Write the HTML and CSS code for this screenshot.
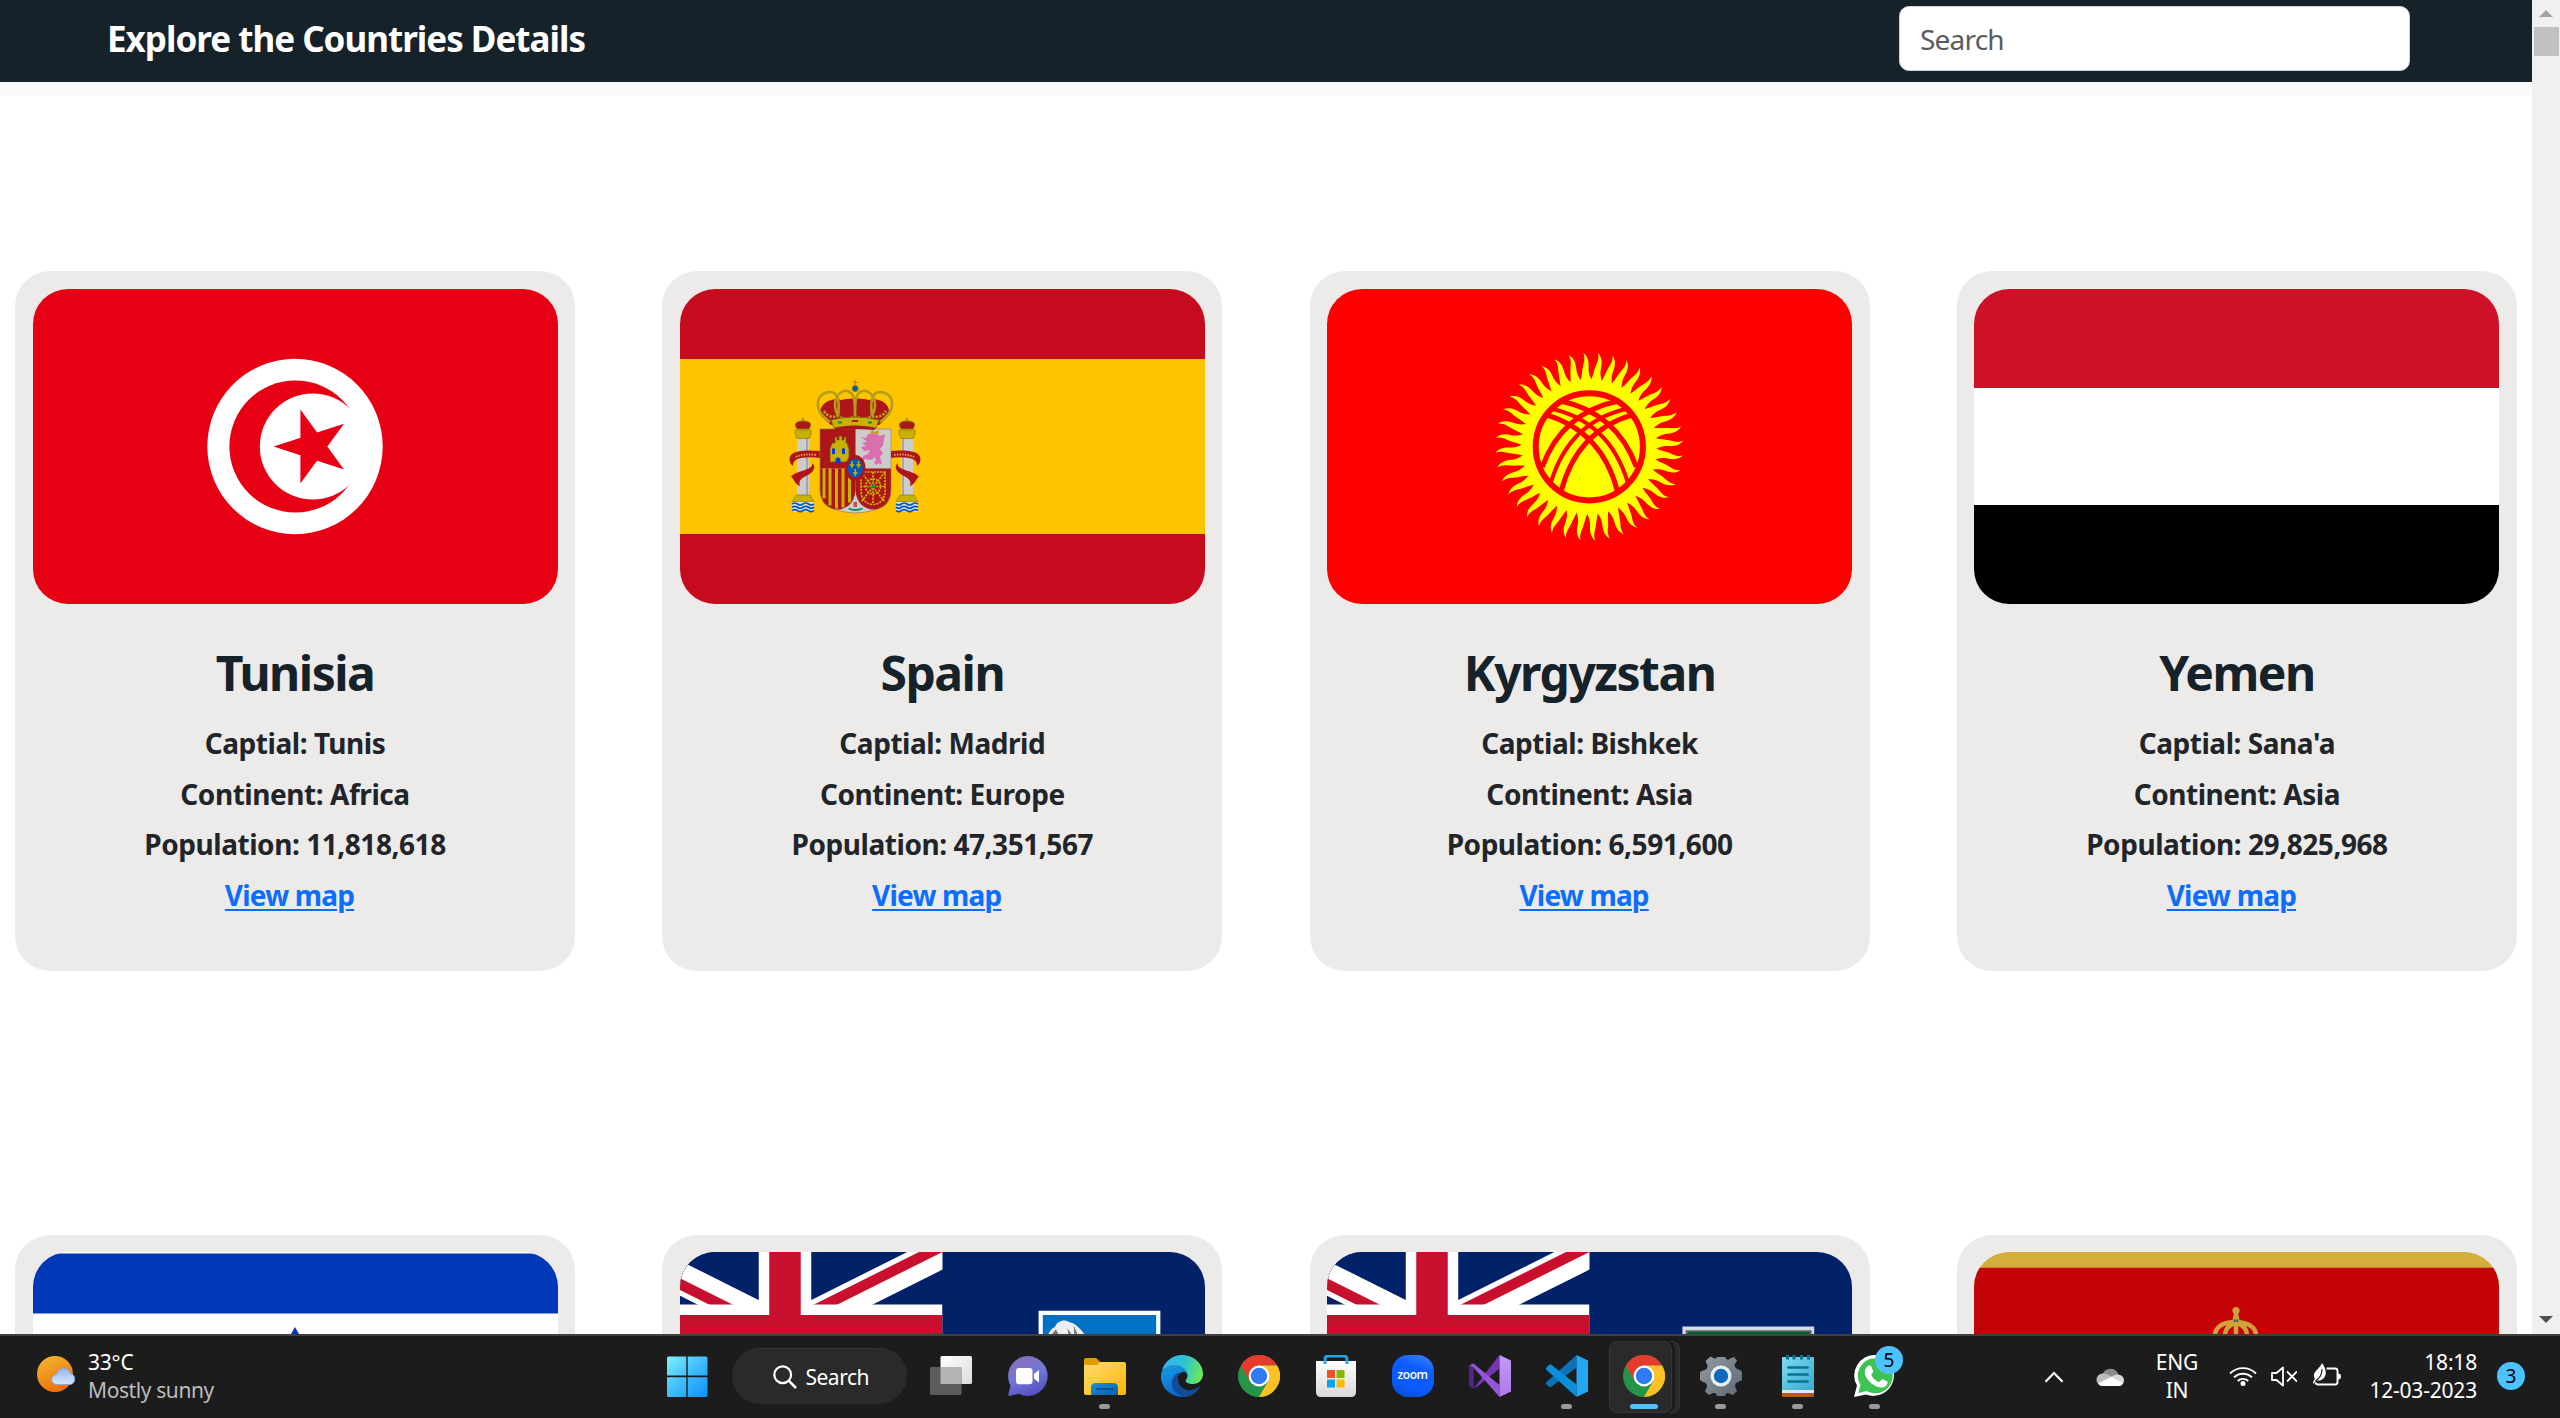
FILE: index.html
```html
<!DOCTYPE html>
<html lang="en">
<head>
<meta charset="utf-8">
<title>Explore the Countries Details</title>
<link rel="stylesheet" href="styles.css">
</head>
<body>
<svg class="defs" width="0" height="0" aria-hidden="true">
  <defs>
    <clipPath id="jackBox"><path d="M0 0h60v30H0z"/></clipPath>
    <clipPath id="jackHalves"><path d="M30,15h30v15zv15h-30zh-30v-15zv-15h30z"/></clipPath>
    <symbol id="jack" viewBox="0 0 60 30">
      <g clip-path="url(#jackBox)">
        <path d="M0 0h60v30H0z" fill="#012169"/>
        <path d="M0,0L60,30M60,0L0,30" stroke="#fff" stroke-width="6"/>
        <path d="M0,0L60,30M60,0L0,30" stroke="#c8102e" stroke-width="4" clip-path="url(#jackHalves)"/>
        <path d="M30 0v30M0 15h60" stroke="#fff" stroke-width="10"/>
        <path d="M30 0v30M0 15h60" stroke="#c8102e" stroke-width="6"/>
      </g>
    </symbol>
    <symbol id="chrome" viewBox="0 0 42 42">
      <circle cx="21" cy="21" r="21" fill="#25954a"/>
      <path d="M2.8 10.5A21 21 0 0 1 39.2 10.5H21L11.9 26.25z" fill="#e33b2e"/>
      <path d="M39.2 10.5A21 21 0 0 1 21 42L30.1 26.25L21 10.5z" fill="#fdc025"/>
      <circle cx="21" cy="21" r="10.4" fill="#fff"/>
      <circle cx="21" cy="21" r="8.2" fill="#2f7bf0"/>
    </symbol>
  </defs>
</svg>

<div class="viewport">
  <div class="page">
    <header class="navbar">
      <h1 class="brand">Explore the Countries Details</h1>
      <input class="search" type="text" placeholder="Search">
    </header>
    <div class="band"></div>
    <main class="grid">
      <article class="card">
        <svg class="flag" viewBox="0 0 525 315">
          <path d="M0 0h525v315H0z" fill="#e70013"/>
          <circle cx="262" cy="157.5" r="87.7" fill="#fff"/>
          <circle cx="262.4" cy="157.5" r="66" fill="#e70013"/>
          <circle cx="279.8" cy="157.5" r="53" fill="#fff"/>
          <path d="M240.6 157.5L311 134.8L267.4 194.4V120.4L311 180.4z" fill="#e70013"/>
        </svg>
        <h2 class="name">Tunisia</h2>
        <p class="fact">Captial: Tunis</p>
        <p class="fact">Continent: Africa</p>
        <p class="fact">Population: 11,818,618</p>
        <p class="fact"><a class="map" href="#">View map</a></p>
      </article>

      <article class="card">
        <svg class="flag" viewBox="0 0 525 315">
          <path d="M0 0h525v315H0z" fill="#c60b1e"/>
          <path d="M0 70h525v175H0z" fill="#ffc400"/>
          <g id="pillar">
            <path d="M117 149h12v57h-12z" fill="#ccc"/>
            <path d="M126 149h2v57h-2z" fill="#a5a5a8"/>
            <path d="M115 141h16v4l-2 4.500h-12l-2-4.500zM112 213l4-7h14l4 7z" fill="#c8b100" stroke="#7d6f10" stroke-width=".6"/>
            <path d="M117 140c-4-6 0-8 6-8s10 2 6 8z" fill="#ad1519" stroke="#8d7a10" stroke-width=".9"/>
            <path d="M123 129v4" stroke="#8d7a10" stroke-width="1.300"/>
            <path d="M112 213h22v9.500h-22z" fill="#dbe0e0"/>
            <path d="M112 215q2.800-2 5.500 0t5.500 0t5.500 0t5.500 0M112 218.300q2.800-2 5.500 0t5.500 0t5.500 0t5.500 0M112 221.600q2.800-2 5.500 0t5.500 0t5.500 0t5.500 0" fill="none" stroke="#005bbf" stroke-width="1.700"/>
            <path d="M140 162c-12-1-24-1-29 4c-3 4-1 9 2 11c0-5 3-7 8-8c6-1 12-1 19 0zM132 174c5 4 1 9-4 12c-6 3-10 5-8 11c-6-2-7-10-9-9c3-6 24-7 21-14z" fill="#ad1519"/>
            <path d="M116 168q7-3.500 20-2" stroke="#d9a53a" stroke-width="2" stroke-dasharray="1.500 1.200" fill="none"/>
          </g>
          <use href="#pillar" transform="translate(350 0) scale(-1 1)"/>
          <path d="M140 140h71v62c0 9-7 17-17 19q-9 3-18.500 3t-18.500-3c-10-2-17-10-17-19z" fill="#ccc"/>
          <path d="M140 140h35.500v39.500H140z" fill="#ad1519"/>
          <path d="M140 179.500h35.500V201c-1 26-35.500 26-35.500 0z" fill="#ad1519"/>
          <path d="M144 179.500v30M150 179.500v37M156.500 179.500v40M163 179.500v39M169.500 179.500v34" stroke="#c8b100" stroke-width="3"/>
          <path d="M175.500 179.500H211V201c0 26-34.500 26-35.500 0z" fill="#ad1519"/>
          <g fill="none" stroke="#c8b100" stroke-width="1.700" stroke-dasharray="2.200 1">
            <path d="M181 183h24v19c0 18-24 18-24 0zM181 183l24 30M205 183l-24 30M193 183v32M180 197.500h26"/>
            <circle cx="193" cy="197.500" r="7.500"/>
          </g>
          <circle cx="193" cy="197.500" r="2" fill="#058e6e"/>
          <path d="M150 173v-13l2-6h3v-6h2v3h2v-4h3v4h2v-3h2v6h1l2 6v13z" fill="#c8b100" stroke="#66590d" stroke-width=".7"/>
          <path d="M152 165v-4a1.500 2 0 0 1 3 0v4zM162 165v-4a1.500 2 0 0 1 3 0v4zM155.500 174v-3a2.500 2.500 0 0 1 5 0v3z" fill="#0039f0"/>
          <path d="M181 148l5 1 2-4 7-1 5 3 5-2-2 11-3 4 3 4-3 4 2 7-6-1-1-6-4 3-6-1-3 3 1-6 5-2 2-4-6 1-3-4 5-1-4-3 5-1zM193 172l6 2-3 2z" fill="#db6fae"/>
          <path d="M190 144l2-3 3 2 3-2 1 4z" fill="#c8a100"/>
          <ellipse cx="175.300" cy="179" rx="10.200" ry="13" fill="#ad1519"/>
          <ellipse cx="175.300" cy="179" rx="7.500" ry="9.500" fill="#005bbf"/>
          <path d="M172 172v7M178.500 172v7M175.300 180v7M169.800 176h4.400M176.300 176h4.400M173 184h4.600" stroke="#c8b100" stroke-width="1.500"/>
          <path d="M168.500 219.500q7 3 14 0" stroke="#058e6e" stroke-width="1.800" fill="none"/>
          <path d="M173.500 213h3.500v5h-3.500z" fill="#b6574b"/>
          <path d="M140 140h71v62c0 9-7 17-17 19q-9 3-18.500 3t-18.500-3c-10-2-17-10-17-19z" fill="none" stroke="#8f7b4a" stroke-width=".6"/>
          <path d="M141 127C137 115 152 108 161 111C170 109 181 109 189 111C198 108 213 115 208 127L199 136H151z" fill="#ad1519"/>
          <g fill="none" stroke="#b59d17" stroke-width="2.600">
            <path d="M150 133C131 120 137 103 150 103C158 103 160 112 158 127M158 127C150 111 160 101 167 102C175 103 175 113 175 127C175 113 175 103 183 102C190 101 200 111 192 127M200 133C219 120 213 103 200 103C192 103 190 112 192 127"/>
            <path d="M144 122q5 8 14 5q8 5 17 0q9 5 17 0q9 3 14-5" stroke-dasharray="2.500 1.200"/>
          </g>
          <path d="M151 131q24-6 48 0l-3 8q-21-4-42 0z" fill="#c8b100" stroke="#74660f" stroke-width=".8"/>
          <path d="M158 133.500h4M188 133.500h4" stroke="#058e6e" stroke-width="2"/><path d="M172 132h6" stroke="#ad1519" stroke-width="2"/>
          <path d="M154 139q21-5 42 0l-2 2q-19-2-38 0z" fill="#ad1519"/>
          <circle cx="175.200" cy="99.500" r="3" fill="#005bbf" stroke="#8d7a10"/>
          <path d="M175.200 91v6M173 93.500h4.500" stroke="#a38c10" stroke-width="1.200"/>
        </svg>
        <h2 class="name">Spain</h2>
        <p class="fact">Captial: Madrid</p>
        <p class="fact">Continent: Europe</p>
        <p class="fact">Population: 47,351,567</p>
        <p class="fact"><a class="map" href="#">View map</a></p>
      </article>

      <article class="card">
        <svg class="flag" viewBox="0 0 525 315">
          <path d="M0 0h525v315H0z" fill="#f00"/>
          <g transform="translate(262.300 157.800)">
            <g fill="#ff0">
              <g id="rays">
                <path id="ray" d="M-6-94C-1.500-90-.3-86-.7-79C-1-74 .5-69 5-62L-10-62C-7-70-7.500-76-6-82C-4.500-87-4.500-90-6-94z"/>
                <use href="#ray" transform="rotate(9)"/>
                <use href="#ray" transform="rotate(18)"/>
                <use href="#ray" transform="rotate(27)"/>
                <use href="#ray" transform="rotate(36)"/>
              </g>
              <use href="#rays" transform="rotate(45)"/>
              <use href="#rays" transform="rotate(90)"/>
              <use href="#rays" transform="rotate(135)"/>
              <use href="#rays" transform="rotate(180)"/>
              <use href="#rays" transform="rotate(225)"/>
              <use href="#rays" transform="rotate(270)"/>
              <use href="#rays" transform="rotate(315)"/>
              <circle r="65"/>
            </g>
            <circle r="53.600" fill="none" stroke="#f00" stroke-width="6"/>
            <g id="lattice" fill="none" stroke="#f00">
              <path d="M-28 44Q-12.500-15.500 43-32" stroke-width="5"/>
              <path d="M-38.500 36Q-20-26 40-38.500" stroke-width="4"/>
              <path d="M-47 20Q-27-34.500 30-46" stroke-width="5"/>
            </g>
            <use href="#lattice" transform="scale(-1 1)"/>
          </g>
        </svg>
        <h2 class="name">Kyrgyzstan</h2>
        <p class="fact">Captial: Bishkek</p>
        <p class="fact">Continent: Asia</p>
        <p class="fact">Population: 6,591,600</p>
        <p class="fact"><a class="map" href="#">View map</a></p>
      </article>

      <article class="card">
        <svg class="flag" viewBox="0 0 525 315">
          <path d="M0 0h525v99H0z" fill="#ce1126"/>
          <path d="M0 99h525v117H0z" fill="#fff"/>
          <path d="M0 216h525v99H0z" fill="#000"/>
        </svg>
        <h2 class="name">Yemen</h2>
        <p class="fact">Captial: Sana'a</p>
        <p class="fact">Continent: Asia</p>
        <p class="fact">Population: 29,825,968</p>
        <p class="fact"><a class="map" href="#">View map</a></p>
      </article>

      <article class="card">
        <svg class="flag" viewBox="0 0 525 315">
          <path d="M0 0h525v315H0z" fill="#fff"/>
          <path d="M0 1.600h525v60H0z" fill="#0038b8"/>
          <path d="M262 85l58 100H204z" fill="none" stroke="#0038b8" stroke-width="10"/>
        </svg>
      </article>

      <article class="card">
        <svg class="flag" viewBox="100 0 1000 600">
          <path d="M0 0h1200v600H0z" fill="#012169"/>
          <use href="#jack" width="600" height="300"/>
          <path d="M783 112h232v260H783z" fill="#fff"/>
          <path d="M791 120h216v250H791z" fill="#0072c6"/>
          <path d="M800 160c4-10 8-14 14-17c5-12 18-16 28-9c10 1 20 12 28 22c20 4 70-2 110 4v20H800z" fill="#eee"/>
          <path d="M808 157l8-10 6 12zM838 145l8 12h-6zM850 140l7 16h-6z" fill="#777"/>
        </svg>
      </article>

      <article class="card">
        <svg class="flag" viewBox="100 0 1000 600">
          <path d="M0 0h1200v600H0z" fill="#012169"/>
          <use href="#jack" width="600" height="300"/>
          <path d="M777 142h251v240H777z" fill="#d5dbe6"/>
          <path d="M783 149h240v230H783z" fill="#666"/>
          <path d="M787 152h232v230H787" fill="#006129"/>
        </svg>
      </article>

      <article class="card">
        <svg class="flag" viewBox="0 0 525 315">
          <path d="M0 0h525v315H0z" fill="#d3ae3b"/>
          <path d="M-36 15.700h598v284H-36z" fill="#c40308"/>
          <g fill="none" stroke="#d0a138" stroke-width="4.500">
            <path d="M243 90C237 78 246 70 261 70C277 70 286 78 280 90M252 90C249 80 253 73 262 71C271 73 275 80 272 90M262 70v20"/>
          </g>
          <circle cx="262" cy="58.500" r="3.600" fill="#d0a138"/>
          <path d="M260 61h4l2 9h-8z" fill="#d0a138"/>
          <path d="M259.500 67.500h5v2.500h-5z" fill="#4d6f6e"/>
          <path d="M197 90l2-6 2 6zM323 90l2-6 2 6z" fill="#d0a138"/>
        </svg>
      </article>
    </main>
  </div>
  <div class="scrollbar">
    <svg class="arrow" viewBox="0 0 14 7"><path d="M0 7L7 0L14 7z" fill="#a3a3a3"/></svg>
    <div class="thumb"></div>
    <svg class="arrow down" viewBox="0 0 14 7"><path d="M0 0h14L7 7z" fill="#505050"/></svg>
  </div>
</div>

<footer class="taskbar">
  <div class="weather">
    <svg class="weather-icon" viewBox="0 0 40 38">
      <defs>
        <linearGradient id="sun" x1=".2" y1="0" x2=".7" y2="1"><stop offset="0" stop-color="#f1b62f"/><stop offset="1" stop-color="#ee6a0c"/></linearGradient>
        <linearGradient id="cloud" x1="0" y1="0" x2="0" y2="1"><stop offset="0" stop-color="#94b6f0"/><stop offset="1" stop-color="#dbe7fa"/></linearGradient>
      </defs>
      <circle cx="18" cy="19" r="18" fill="url(#sun)"/>
      <path d="M20 29.500a5 5 0 0 1-.7-10a7.500 7.500 0 0 1 14.500-.8a5.600 5.600 0 0 1-.4 10.800z" fill="url(#cloud)" stroke="#7fa3e6" stroke-width=".8"/>
    </svg>
    <div class="lines"><div>33°C</div><div class="dim">Mostly sunny</div></div>
  </div>

  <div class="apps">
    <div class="slot">
      <svg class="icon" viewBox="0 0 42 42">
        <defs><linearGradient id="win" x1="0" y1="0" x2="1" y2="1"><stop offset="0" stop-color="#7df2fd"/><stop offset=".5" stop-color="#40bdfc"/><stop offset="1" stop-color="#0a93fb"/></linearGradient></defs>
        <path d="M2.500 1.500H20.300V20.500H1V3q0-1.500 1.500-1.500zM21.700 1.500H40q1.500 0 1.500 1.500V20.500H21.700zM1 22.200H20.300V42H2.500Q1 42 1 40.500zM21.700 22.200H41.500V40.500Q41.500 42 40 42H21.700z" fill="url(#win)"/>
      </svg>
    </div>
    <div class="pill">
      <svg class="lens" viewBox="0 0 24 24"><circle cx="9.700" cy="9.700" r="8.400" fill="none" stroke="#fff" stroke-width="2.200"/><path d="M15.700 15.700L23 23" stroke="#fff" stroke-width="2.600"/></svg>
      <span>Search</span>
    </div>
    <div class="slot">
      <svg class="icon" viewBox="0 0 42 42">
        <defs><linearGradient id="tv" x1="0" y1="0" x2="1" y2="1"><stop offset="0" stop-color="#fff"/><stop offset="1" stop-color="#dcdcdc"/></linearGradient></defs>
        <rect x="10.500" y="1" width="31.500" height="28" rx="1.500" fill="url(#tv)"/>
        <rect x="0" y="12" width="31.500" height="28" rx="1.500" fill="#5c5c5c"/>
        <path d="M10.500 12H30q1.500 0 1.500 1.500V29h-21z" fill="#b4b4b4"/>
      </svg>
    </div>
    <div class="slot">
      <svg class="icon" viewBox="0 0 42 42">
        <defs><linearGradient id="chat" x1=".2" y1="0" x2=".6" y2="1"><stop offset="0" stop-color="#8b6bb8"/><stop offset=".5" stop-color="#7378d6"/><stop offset="1" stop-color="#5450c4"/></linearGradient></defs>
        <path d="M21 1a20 20 0 1 1-9.500 37.800L2.500 41Q1 41 1.400 39.500L3.500 30.500A20 20 0 0 1 21 1z" fill="url(#chat)"/>
        <rect x="9" y="13" width="16.500" height="16.300" rx="3" fill="#fff"/>
        <path d="M27 19l5-4v12.500l-5-4z" fill="#fff"/>
      </svg>
    </div>
    <div class="slot">
      <svg class="icon" viewBox="0 0 42 42">
        <defs><linearGradient id="fold" x1="0" y1="0" x2="1" y2="1"><stop offset="0" stop-color="#ffdb6e"/><stop offset="1" stop-color="#fbb806"/></linearGradient>
        <linearGradient id="tray" x1="0" y1="0" x2="1" y2="1"><stop offset="0" stop-color="#1d8fdc"/><stop offset="1" stop-color="#0a5ea9"/></linearGradient></defs>
        <path d="M0 5q0-2 2-2h10l5 4.500v6H0z" fill="#dd9c02"/>
        <path d="M0 11q0-1 1-1h12l3-3h24q2 0 2 2v29q0 2-2 2H2q-2 0-2-2z" fill="url(#fold)"/>
        <path d="M7 40v-7.500q0-4.500 4.500-4.500h18q4.500 0 4.500 4.500V40z" fill="url(#tray)"/>
        <path d="M12.500 34h17" stroke="#075092" stroke-width="2"/>
      </svg>
      <i class="dot"></i>
    </div>
    <div class="slot">
      <svg class="icon" viewBox="0 0 42 42">
        <defs>
          <linearGradient id="e1" x1="0" y1=".3" x2="1" y2=".5"><stop offset="0" stop-color="#35b5f1"/><stop offset=".5" stop-color="#2cc3d3"/><stop offset="1" stop-color="#6cea57"/></linearGradient>
          <linearGradient id="e2" x1="0" y1="0" x2=".4" y2="1"><stop offset="0" stop-color="#1b9de2"/><stop offset="1" stop-color="#0868cf"/></linearGradient>
        </defs>
        <path d="M1 15C4 6 12 0 21 0C33 0 42 9 42 18.500C42 25 37.500 29 32 29C28 29 24.500 27.500 24.500 25.500C25.500 24 26.500 23 26.500 20C25 13 12 8 1 15z" fill="url(#e1)"/>
        <path d="M0 21C0 14 6 10 13 10C21 10 26 15 26.500 19C25 17 23 16.500 21 17C16 19 13 29 18 36C21 40 26 41.500 27 41C16 44.500 0 37 0 21z" fill="url(#e2)"/>
        <path d="M19 17.500C15 22 16.500 33 26 35C32 36 36 32.500 38 31.500Q39 31 38.800 32C36 37 31 41.500 24 41.800C14 40 10 33 11 26C12 21 16 18 19 17.500z" fill="#124e98"/>
      </svg>
    </div>
    <div class="slot"><svg class="icon" viewBox="0 0 42 42"><use href="#chrome"/></svg></div>
    <div class="slot">
      <svg class="icon" viewBox="0 0 42 42">
        <defs><linearGradient id="bag" x1="0" y1="0" x2="0" y2="1"><stop offset="0" stop-color="#fff"/><stop offset="1" stop-color="#d9d9d9"/></linearGradient></defs>
        <path d="M1 6h40v31q0 5-5 5H6q-5 0-5-5z" fill="url(#bag)"/>
        <path d="M10 9V4q0-3 3-3h16q3 0 3 3v5" fill="none" stroke="#20a6e8" stroke-width="2.800"/>
        <path d="M12 15h8v8h-8z" fill="#f25022"/><path d="M21.500 15h8v8h-8z" fill="#7fba00"/><path d="M12 24.500h8v8h-8z" fill="#00a4ef"/><path d="M21.500 24.500h8v8h-8z" fill="#ffb901"/>
      </svg>
    </div>
    <div class="slot">
      <div class="zoom">zoom</div>
    </div>
    <div class="slot">
      <svg class="icon" viewBox="0 0 42 42">
        <defs><linearGradient id="vsr" x1="0" y1="0" x2="0" y2="1"><stop offset="0" stop-color="#c29bf5"/><stop offset="1" stop-color="#ae78ea"/></linearGradient></defs>
        <path d="M0 10.500L4.500 8.500V33.500L0 31z" fill="#5b2a97"/>
        <path d="M4.500 33.500L30.500 0V13.500L9 31z" fill="#7734b4"/>
        <path d="M0 10.500L4.500 8.500L30.500 30V42L4 12z" fill="#9455d8"/>
        <path d="M4.500 33.500L0 31V10.500L3.500 12V30z" fill="#52228a"/>
        <path d="M30.500 0L42 5.500V36.500L30.500 42z" fill="url(#vsr)"/>
      </svg>
    </div>
    <div class="slot">
      <svg class="icon" viewBox="0 0 42 42">
        <path d="M30.500 0V12.500L5 32L3.500 32L0 29V27.500z" fill="#0a72b8"/>
        <path d="M3.500 9.500H5L30.500 29.500V42L0 14.500V13z" fill="#0b8fdb"/>
        <path d="M30.500 0L42 5.500V36.500L30.500 42z" fill="#23a7f2"/>
      </svg>
      <i class="dot"></i>
    </div>
    <div class="slot active">
      <svg class="icon" viewBox="0 0 42 42"><use href="#chrome"/></svg>
      <i class="dot wide"></i>
    </div>
    <div class="slot">
      <svg class="icon" viewBox="0 0 42 42">
        <defs><linearGradient id="gear" gradientUnits="userSpaceOnUse" x1="0" y1="0" x2="42" y2="42"><stop offset="0" stop-color="#949aa1"/><stop offset="1" stop-color="#5f6a75"/></linearGradient></defs>
        <path d="M10.500 1.500Q16 5 16.500 2.500L17 2H25L26 3.500Q28 6 30 3.500L34 2L37 5.500L34.500 10Q35 14 40 15L42 17V25L39 26.500Q35 27.500 35 31L37 36L33 40L28 38Q25.500 38 25 41H17Q16.500 37.500 13 38L9 40L5 36.500L7 31.500Q7 27.500 3 27L0 25V17L3 15.500Q7.500 15 7.500 10.500L5.500 6z" fill="url(#gear)"/>
        <circle cx="21" cy="21" r="10.500" fill="#e9edf0"/><circle cx="21" cy="21" r="7.200" fill="#0f69bd"/>
      </svg>
      <i class="dot"></i>
    </div>
    <div class="slot">
      <svg class="icon" viewBox="0 0 42 42">
        <defs><linearGradient id="pad" x1="0" y1="0" x2="1" y2="1"><stop offset="0" stop-color="#7edcf3"/><stop offset="1" stop-color="#38a9cd"/></linearGradient></defs>
        <path d="M5 3q0-1 1-1h30q1 0 1 1v32H5z" fill="url(#pad)"/>
        <path d="M5 35h32v3H5z" fill="#e6e6e6"/><path d="M5 38h32v3q0 1-1 1H6q-1 0-1-1z" fill="#b35b0f"/>
        <path d="M10.500 0v4.500M17 0v4.500M24.500 0v4.500M31.500 0v4.500" stroke="#0a7191" stroke-width="3"/>
        <path d="M11.500 12.500h19M11.500 19.500h19M11.500 26.500h19" stroke="#0a7191" stroke-width="2.700" stroke-linecap="round"/>
      </svg>
      <i class="dot"></i>
    </div>
    <div class="slot">
      <svg class="icon" viewBox="0 0 42 42">
        <path d="M21.500 0A20.500 20.500 0 1 1 12 39.500L0 42L3 30.500A20.500 20.500 0 0 1 21.500 0z" fill="#fff"/>
        <path d="M21.500 3.300A17.500 17.500 0 1 1 12.500 36L4.500 38L6.500 30A17.500 17.500 0 0 1 21.500 3.300z" fill="#3cc352"/>
        <path d="M12.500 12.500c2-3 4.500-2 5.200 0l1.500 3.800c.3 1-1.200 2.700-2 3.500c2 4 4.500 6 8 7.500c1.500-1.500 2.500-3.500 3.800-3l4 2c1.300.8.200 4.200-1.600 5.300c-6 3.500-17.500-3-20.400-12c-.7-3 .2-5.500 1.500-7.100z" fill="#fff"/>
      </svg>
      <b class="badge over">5</b>
      <i class="dot"></i>
    </div>
  </div>

  <div class="tray">
    <svg class="chevron" viewBox="0 0 20 12"><path d="M1.500 10.800L10 2L18.500 10.800" fill="none" stroke="#fff" stroke-width="2.200"/></svg>
    <svg class="cloud" viewBox="0 0 28 18">
      <path d="M6 8A8.500 8.500 0 0 1 22.500 6.500L14 12z" fill="#8c8c8c"/>
      <path d="M7 18A6.200 6.200 0 0 1 6.500 5.500C10 5 14 7.500 17 9.500L8 18z" fill="#bdbdbd"/>
      <path d="M15 9.500C19 4.500 28 6 28 12.500C28 16 25 18 22.500 18H14z" fill="#d8d8d8"/>
      <path d="M2 15.500L15.500 8.800L27 15.500Q25 18 22.500 18H6.500Q3.500 18 2 15.500z" fill="#fff"/>
    </svg>
    <div class="lines lang"><div>ENG</div><div>IN</div></div>
    <svg class="wifi" viewBox="0 0 28 21"><g fill="none" stroke="#fff" stroke-width="1.900"><path d="M1 8.500a18.500 18.500 0 0 1 26 0M5 12.400a12.800 12.800 0 0 1 18 0M8.800 16a7.400 7.400 0 0 1 10.400 0"/></g><circle cx="14" cy="18.400" r="2.500" fill="#fff"/></svg>
    <svg class="speaker" viewBox="0 0 26 21"><path d="M1 7H5.500L12 1.500V19.500L5.500 14H1z" fill="none" stroke="#fff" stroke-width="1.800" stroke-linejoin="round"/><path d="M16 5.500L26 15.500M26 5.500L16 15.500" stroke="#fff" stroke-width="1.800"/></svg>
    <svg class="battery" viewBox="0 0 28 23"><path d="M13.500 5.500H22q2.500 0 2.500 2.500V19q0 2.500-2.500 2.500H5q-2 0-2.500-2" fill="none" stroke="#fff" stroke-width="1.900"/><path d="M25 10.500q3 0 3 3t-3 3z" fill="#fff"/><path d="M9 0C13 5 15 13 9 16.500C7 18 4 17.500 3.500 17.500L0 21C0 18 1 17 2 16C-2 9 6 7 9 0z" fill="#fff"/><path d="M2.500 18Q9 14 9 6" fill="none" stroke="#1c1c1c" stroke-width="1.200"/></svg>
    <div class="lines clock"><div>18:18</div><div>12-03-2023</div></div>
    <b class="badge">3</b>
  </div>
</footer>
</body>
</html>
```
FILE: styles.css
```css
* { box-sizing: border-box; }

body {
  margin: 0;
  width: 2560px;
  height: 1418px;
  overflow: hidden;
  display: flex;
  flex-direction: column;
  background: #fff;
  font-family: "Noto Sans", "Open Sans", sans-serif;
  color: #212529;
}

svg { display: block; flex: none; }
.defs { position: absolute; }

.viewport { display: flex; height: 1334px; flex: none; overflow: hidden; }
.page { flex: 1; min-width: 0; }

.navbar {
  display: flex;
  justify-content: space-between;
  align-items: flex-start;
  height: 82px;
  padding: 6px 122px 0 107px;
  background: #16222a;
}
.brand {
  margin: 0;
  font-size: 35px;
  font-weight: 700;
  line-height: 66px;
  letter-spacing: -1px;
  color: #fff;
}
.search {
  width: 511px;
  height: 65px;
  padding: 0 20px;
  border: 1px solid #ced4da;
  border-radius: 10px;
  background: #fff;
  font: 400 28px "Noto Sans", sans-serif;
  letter-spacing: -0.8px;
}
.search::placeholder { color: #595c5f; opacity: 1; }
.band { height: 14px; background: #f8f9fb; }

.grid {
  display: grid;
  grid-template-columns: repeat(4, 560px);
  grid-auto-rows: 700px;
  gap: 263.5px 87.300px;
  padding: 175px 0 0 15px;
}
.card {
  padding: 17.5px;
  border-radius: 35px;
  background: #ecebe9;
  text-align: center;
}
.flag { width: 525px; height: 315px; border-radius: 35px; overflow: hidden; }
.name {
  margin: 39.5px 0 16px;
  font-size: 48px;
  font-weight: 700;
  line-height: 59px;
  letter-spacing: -1.5px;
  color: #16222a;
}
.fact {
  margin: 0;
  font-size: 28px;
  font-weight: 700;
  line-height: 50.7px;
  letter-spacing: -0.45px;
}
.map {
  margin-right: 11px;
  color: #0d6efd;
  letter-spacing: -0.8px;
  text-decoration: underline;
  text-decoration-thickness: 2px;
  text-underline-offset: 3px;
}

.scrollbar {
  display: flex;
  flex-direction: column;
  align-items: center;
  width: 28px;
  padding: 10px 0 11px;
  background: #f0f0f0;
}
.arrow { width: 14px; height: 7px; }
.arrow.down { margin-top: auto; }
.thumb { width: 25px; height: 29px; margin-top: 10px; background: #c1c1c1; }

.taskbar {
  display: flex;
  align-items: center;
  flex: none;
  height: 84px;
  border-top: 2px solid #404040;
  background: #1c1c1c;
  color: #fff;
  font-size: 21px;
}
.weather { display: flex; align-items: center; width: 648.500px; padding-left: 37px; gap: 11px; }
.weather-icon { width: 40px; height: 38px; margin-bottom: 6px; }
.lines { line-height: 28px; margin-bottom: 3px; letter-spacing: -0.2px; white-space: nowrap; }
.dim { color: #bdbdbd; letter-spacing: -0.4px; }

.apps { display: flex; align-items: center; }
.slot {
  position: relative;
  display: flex;
  align-items: center;
  justify-content: center;
  width: 77px;
  height: 82px;
  padding-bottom: 2px;
}
.icon { width: 42px; height: 42px; position: relative; }
.dot {
  position: absolute;
  left: 33px;
  bottom: 9px;
  width: 11px;
  height: 5px;
  border-radius: 3px;
  background: #9a9a9a;
}
.dot.wide { left: 24.500px; width: 28px; background: #4cc2ff; }
.active::before,
.active::after {
  content: "";
  position: absolute;
  top: 5px;
  left: 4px;
  width: 61px;
  height: 70px;
  border: 1.500px solid #363636;
  border-radius: 8px;
  background: #2a2a2a;
}
.active::before { left: 12px; }
.active::after { box-shadow: 3px 0 0 #1c1c1c; }
.active .icon, .active .dot { z-index: 1; }
.zoom {
  width: 42px;
  height: 42px;
  border-radius: 16px;
  background: linear-gradient(200deg, #3f83fb, #0b5cff 35%, #0b5cff 70%, #0848c8);
  text-align: center;
  font: 600 12px/39px "Open Sans", sans-serif;
  letter-spacing: -0.4px;
}
.pill {
  display: flex;
  align-items: center;
  width: 175px;
  height: 56px;
  margin: 0 5.500px 2px 6px;
  padding-left: 41px;
  gap: 9px;
  border-top: 1.500px solid #343434;
  border-radius: 28px;
  background: #2a2a2a;
  letter-spacing: -0.5px;
}
.lens { width: 24px; height: 24px; }
.badge {
  width: 28px;
  height: 28px;
  border-radius: 50%;
  background: #4cc2ff;
  color: #000;
  font-size: 19px;
  font-weight: 400;
  line-height: 28px;
  text-align: center;
  margin-bottom: 2px;
}
.badge.over { position: absolute; left: 39px; top: 10px; }

.tray { display: flex; align-items: center; margin-left: auto; padding-right: 35px; }
.chevron { width: 20px; height: 12px; }
.cloud { width: 28px; height: 18px; margin-left: 32px; }
.lang { width: 40px; margin-left: 33px; margin-right: 32px; display: flex; flex-direction: column; align-items: center; }
.wifi { width: 28px; height: 21px; margin-bottom: 3px; }
.speaker { width: 26px; height: 21px; margin: 0 16px 2px 14px; }
.battery { width: 28px; height: 23px; margin-bottom: 6px; }
.clock { width: 136px; margin-right: 20px; text-align: right; }
```
